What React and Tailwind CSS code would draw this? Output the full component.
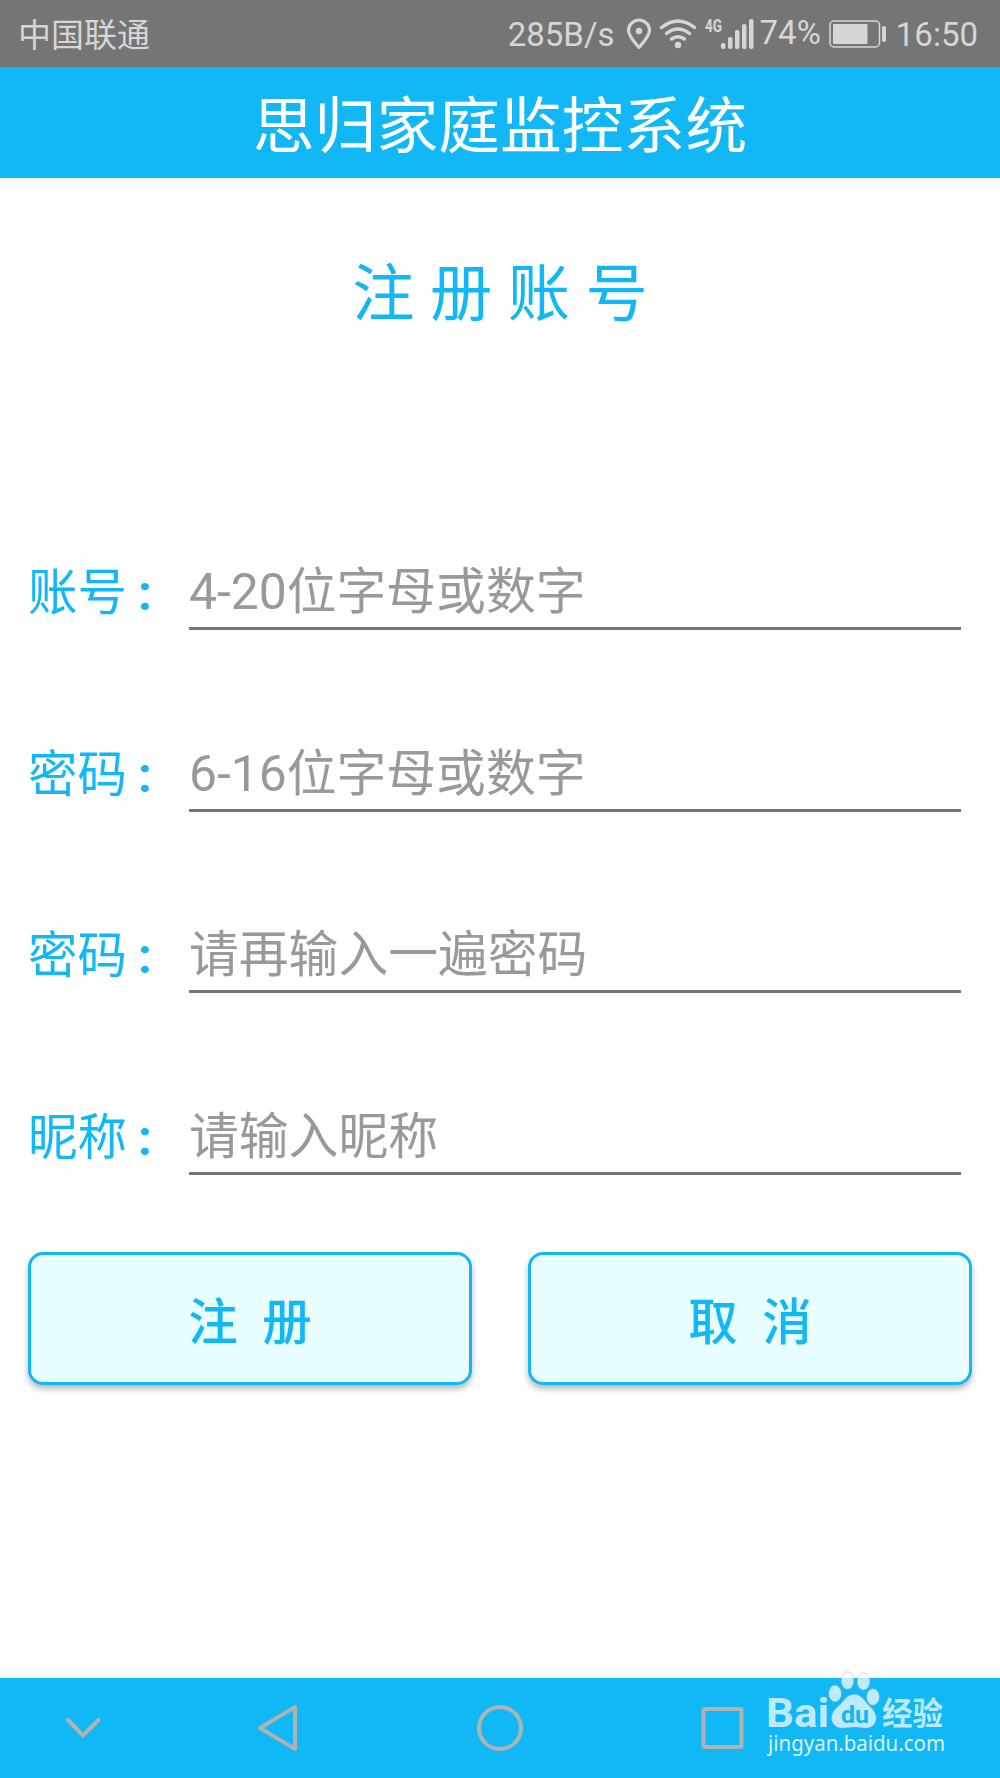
import { useState } from "react";

const FIELDS = [
  { id: "account", label: "账号", hint: "4-20位字母或数字", type: "text" },
  { id: "password", label: "密码", hint: "6-16位字母或数字", type: "password" },
  { id: "confirm", label: "密码", hint: "请再输入一遍密码", type: "password" },
  { id: "nickname", label: "昵称", hint: "请输入昵称", type: "text" },
];

const StatusBar = () => (
  <div className="flex h-[67px] shrink-0 items-center bg-[#757575] pt-px pl-[18px] pr-[22px] text-[33px] leading-none text-[#d6d6d6]">
    <span className="pt-[3px]">中国联通</span>
    <span className="ml-auto pt-px">285B/s</span>
    <svg className="ml-[11px] h-[32px] w-[26px]" viewBox="0 0 26 32" fill="none">
      <path d="M13 29.5C8 23.5 2.5 18 2.5 12.5a10.5 10.5 0 0 1 21 0C23.5 18 18 23.5 13 29.5Z" stroke="currentColor" strokeWidth="3.2" strokeLinejoin="round" />
      <circle cx="13" cy="13" r="3.2" fill="currentColor" />
    </svg>
    <svg className="ml-[7px] h-[30px] w-[38px]" viewBox="0 0 38 30" fill="none" stroke="currentColor" strokeWidth="3.4" strokeLinecap="round">
      <path d="M2.5 8.5Q19 -4.5 35.5 8.5" />
      <path d="M7.5 14.5Q19 5.5 30.5 14.5" />
      <path d="M12.5 20Q19 15.5 25.5 20" />
      <circle cx="19" cy="26" r="3.2" fill="currentColor" stroke="none" />
    </svg>
    <svg className="ml-[7px] h-[32px] w-[50px] overflow-visible" viewBox="0 0 50 32" fill="currentColor">
      <text x="1" y="14" fontSize="19" fontWeight="700" textLength="17" lengthAdjust="spacingAndGlyphs">4G</text>
      <rect x="17" y="25" width="4.5" height="6" rx="2" />
      <rect x="24" y="19" width="4.5" height="12" rx="2" />
      <rect x="31" y="12" width="4.5" height="19" rx="2" />
      <rect x="38" y="6" width="4.5" height="25" rx="2" />
      <rect x="45" y="1" width="4.5" height="30" rx="2" />
    </svg>
    <span className="ml-[6px] pb-[4px]">74%</span>
    <svg className="ml-[8px] h-[28px] w-[58px]" viewBox="0 0 58 28" fill="none">
      <rect x="1" y="1" width="49.5" height="26" rx="4" stroke="currentColor" strokeWidth="1.5" />
      <rect x="4" y="4" width="34.5" height="20" rx="1" fill="currentColor" />
      <rect x="53" y="6" width="4" height="16" rx="2" fill="currentColor" />
    </svg>
    <span className="ml-[9px] pt-px">16:50</span>
  </div>
);

const Field = ({ field, value, onChange }) => (
  <div className="flex h-[181.5px] items-start">
    <label htmlFor={field.id} className="w-[161px] shrink-0 whitespace-nowrap pt-[3px] text-[49.5px] leading-[72px] text-[#12b7f5]">
      {field.label}
      <span className="ml-[11px] font-bold">:</span>
    </label>
    <input
      id={field.id}
      type={field.type}
      value={value}
      placeholder={field.hint}
      onChange={(e) => onChange(field.id, e.target.value)}
      className="h-[76px] w-[772px] border-b-[3px] border-[#757575] pt-[3px] text-[49.8px] outline-none placeholder:text-[#999999]"
    />
  </div>
);

const ActionButton = ({ children, onClick }) => (
  <button
    onClick={onClick}
    className="h-[133px] w-[444px] whitespace-pre rounded-[15px] border-[3px] border-[#12b7f5] bg-[#e9feff] pt-[10px] text-[49.5px] font-medium text-[#12b7f5] shadow-[0_4px_6px_rgba(0,0,0,0.28)]"
  >
    {children}
  </button>
);

const Watermark = () => (
  <svg className="absolute left-[764px] top-[1668px] h-[92px] w-[186px] overflow-visible" viewBox="764 1668 186 92" fill="#ffffff" fillOpacity="0.72">
    <text x="766" y="1727" fontSize="41" fontWeight="700" textLength="63" lengthAdjust="spacingAndGlyphs">Bai</text>
    <g stroke="#9bb5c0" strokeOpacity="0.45">
      <ellipse cx="835" cy="1693.5" rx="6.3" ry="8.3" />
      <ellipse cx="847.5" cy="1680.5" rx="6.2" ry="8.8" />
      <ellipse cx="863.5" cy="1681.5" rx="6.3" ry="8.5" />
      <ellipse cx="873" cy="1697" rx="6.3" ry="8.3" />
      <path d="M854 1694.5C862 1694.5 865 1702 870 1706.5C880 1715 877 1728 866 1728C860 1728 858 1727 854 1727C850 1727 847 1728 842 1728C831 1728 828 1715 837 1707.5C844 1702 846 1694.5 854 1694.5Z" />
    </g>
    <text x="841" y="1723" fontSize="24" fontWeight="700" fill="#12b7f5" fillOpacity="1" textLength="28" lengthAdjust="spacingAndGlyphs">du</text>
    <text x="882" y="1725" fontSize="32" fontWeight="700" textLength="61" lengthAdjust="spacingAndGlyphs">经验</text>
    <text x="768" y="1751" fontSize="22" className="font-['Noto_Sans']" fillOpacity="0.85" textLength="177" lengthAdjust="spacingAndGlyphs">jingyan.baidu.com</text>
  </svg>
);

const NavBar = () => (
  <div className="mt-auto flex h-[100px] shrink-0 items-center bg-[#12b7f5]">
    <svg className="h-full w-[800px]" viewBox="0 0 800 100" fill="none" stroke="#b2b2b2" strokeWidth="4" strokeLinecap="round" strokeLinejoin="round">
      <path d="M68 42L83 57.5L98.5 42" />
      <path d="M260 50L295 29V71Z" />
      <circle cx="500" cy="50" r="21" />
      <rect x="703.5" y="31" width="38" height="38" rx="1" />
    </svg>
  </div>
);

const App = () => {
  const [form, setForm] = useState({ account: "", password: "", confirm: "", nickname: "" });

  const handleChange = (id, value) => setForm({ ...form, [id]: value });
  const handleReset = () => setForm({ account: "", password: "", confirm: "", nickname: "" });

  return (
    <div className="relative flex h-[1778px] w-[1000px] flex-col overflow-hidden bg-white font-[Roboto,'Noto_Sans_CJK_SC',sans-serif]">
      <StatusBar />
      <header className="flex h-[111px] shrink-0 items-center justify-center bg-[#12b7f5] pt-[10px] text-[61.8px] text-white">
        思归家庭监控系统
      </header>

      <h1 className="mt-[72px] text-center text-[62.3px] leading-[90px] text-[#12b7f5]">注 册 账 号</h1>

      <div className="mt-[214px] pl-[28px]">
        {FIELDS.map((field) => (
          <Field key={field.id} field={field} value={form[field.id]} onChange={handleChange} />
        ))}
      </div>

      <div className="-mt-[28px] flex justify-between px-[28px]">
        <ActionButton>注  册</ActionButton>
        <ActionButton onClick={handleReset}>取  消</ActionButton>
      </div>

      <NavBar />
      <Watermark />
    </div>
  );
};

export default App;
